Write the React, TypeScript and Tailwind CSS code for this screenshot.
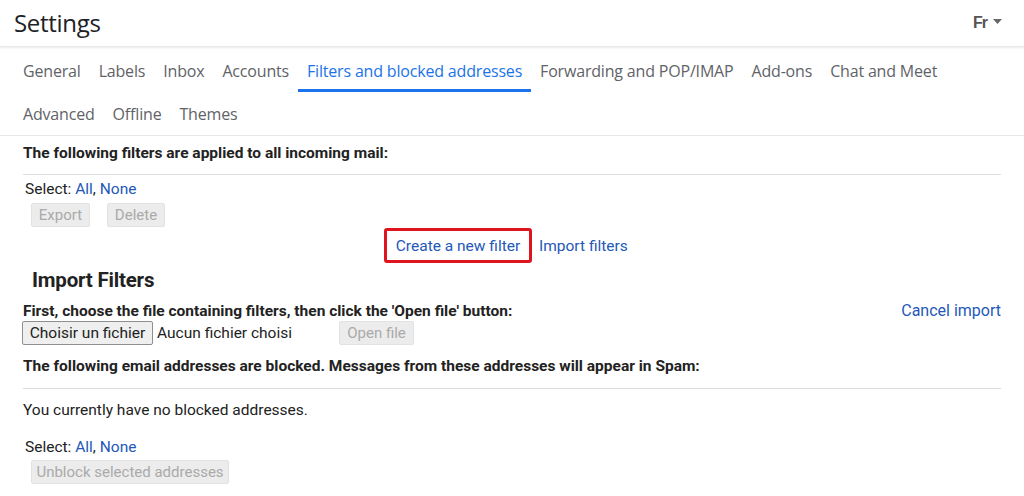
import React from "react";

const tabsRow1 = [
  "General",
  "Labels",
  "Inbox",
  "Accounts",
  "Filters and blocked addresses",
  "Forwarding and POP/IMAP",
  "Add-ons",
  "Chat and Meet",
];
const tabsRow2 = ["Advanced", "Offline", "Themes"];

function Tab({ label, active }: { label: string; active?: boolean }) {
  return (
    <div
      className={
        "h-[43px] flex items-center pt-[4px] px-[9px] border-b-[3px] " +
        (active ? "border-[#1a73e8] text-[#1a73e8]" : "border-transparent text-[#5f6368]")
      }
    >
      {label}
    </div>
  );
}

function DisabledBtn({ children, className = "" }: { children: React.ReactNode; className?: string }) {
  return (
    <div
      className={
        "h-[24px] flex items-center justify-center bg-[#ececec] border border-[#e2e2e2] text-[#aaaaaa] text-[15px] rounded-[2px] " +
        className
      }
    >
      {children}
    </div>
  );
}

export default function App() {
  return (
    <div className="w-[1024px] h-[496px] bg-white overflow-hidden font-['Roboto',sans-serif] text-[#222]">
      {/* header */}
      <div className="h-[47px] flex items-center justify-between pl-[14px] pr-[22px] border-b border-[#e8e8e8] shadow-[0_1px_2px_rgba(0,0,0,0.08)]">
        <div className="text-[24px] text-[#202124] font-['Open_Sans',sans-serif] tracking-[-0.3px]">Settings</div>
        <div className="flex items-center gap-[6px] text-[#555]">
          <span className="text-[16px] font-bold font-['Liberation_Sans',sans-serif] tracking-[-1px]">Fr</span>
          <svg width="9" height="5" viewBox="0 0 9 5" className="mb-[4px]">
            <path d="M0 0 L9 0 L4.5 5 Z" fill="#666" />
          </svg>
        </div>
      </div>

      {/* tabs */}
      <div className="border-b border-[#e6e6e6] pl-[14px] text-[16px] font-['Open_Sans',sans-serif] tracking-[-0.18px]">
        <div className="flex pt-[2px]">
          {tabsRow1.map((t) => (
            <Tab key={t} label={t} active={t === "Filters and blocked addresses"} />
          ))}
        </div>
        <div className="flex">
          {tabsRow2.map((t) => (
            <Tab key={t} label={t} />
          ))}
        </div>
      </div>

      {/* content */}
      <div className="px-[23px] text-[15.5px] leading-[18px]">
        <div className="pt-[7px] font-bold h-[39px] border-b border-[#dcdcdc] leading-[20px]">
          The following filters are applied to all incoming mail:
        </div>
        <div className="pl-[2px] pt-[5px] leading-[18px]">
          Select: <span className="text-[#2358b8]">All</span>, <span className="text-[#2358b8]">None</span>
        </div>
        <div className="flex gap-[17px] pl-[8px] mt-[5px]">
          <DisabledBtn className="w-[59px]">Export</DisabledBtn>
          <DisabledBtn className="w-[58px]">Delete</DisabledBtn>
        </div>
        <div className="flex items-center mt-[1px] ml-[361px]">
          <div className="h-[35px] w-[148px] border-[3px] border-[#e0141e] rounded-[3px] flex items-center justify-center text-[#2358b8]">
            Create a new filter
          </div>
          <div className="ml-[7px] text-[#2358b8]">Import filters</div>
        </div>
        <div className="pl-[9px] text-[20.5px] font-bold leading-[28px] mt-[3px] tracking-[-0.2px]">Import Filters</div>
        <div className="flex justify-between items-center mt-[7px] leading-[20px]">
          <div className="font-bold">First, choose the file containing filters, then click the 'Open file' button:</div>
          <div className="text-[#2358b8] text-[16px]">Cancel import</div>
        </div>
        <div className="flex items-center ml-[-1px]">
          <div className="h-[24px] w-[131px] flex items-center justify-center bg-[#efefef] border border-[#8f8f8f] rounded-[2px]">
            Choisir un fichier
          </div>
          <div className="ml-[4px] w-[182px]">Aucun fichier choisi</div>
          <DisabledBtn className="w-[75px]">Open file</DisabledBtn>
        </div>
        <div className="pt-[11px] font-bold h-[44px] border-b border-[#dcdcdc] leading-[20px]">
          The following email addresses are blocked. Messages from these addresses will appear in Spam:
        </div>
        <div className="pt-[12px] leading-[18px]">You currently have no blocked addresses.</div>
        <div className="pl-[2px] pt-[19px] leading-[18px]">
          Select: <span className="text-[#2358b8]">All</span>, <span className="text-[#2358b8]">None</span>
        </div>
        <div className="pl-[8px] mt-[4px]">
          <DisabledBtn className="w-[198px] text-[14.5px]">Unblock selected addresses</DisabledBtn>
        </div>
      </div>
    </div>
  );
}
